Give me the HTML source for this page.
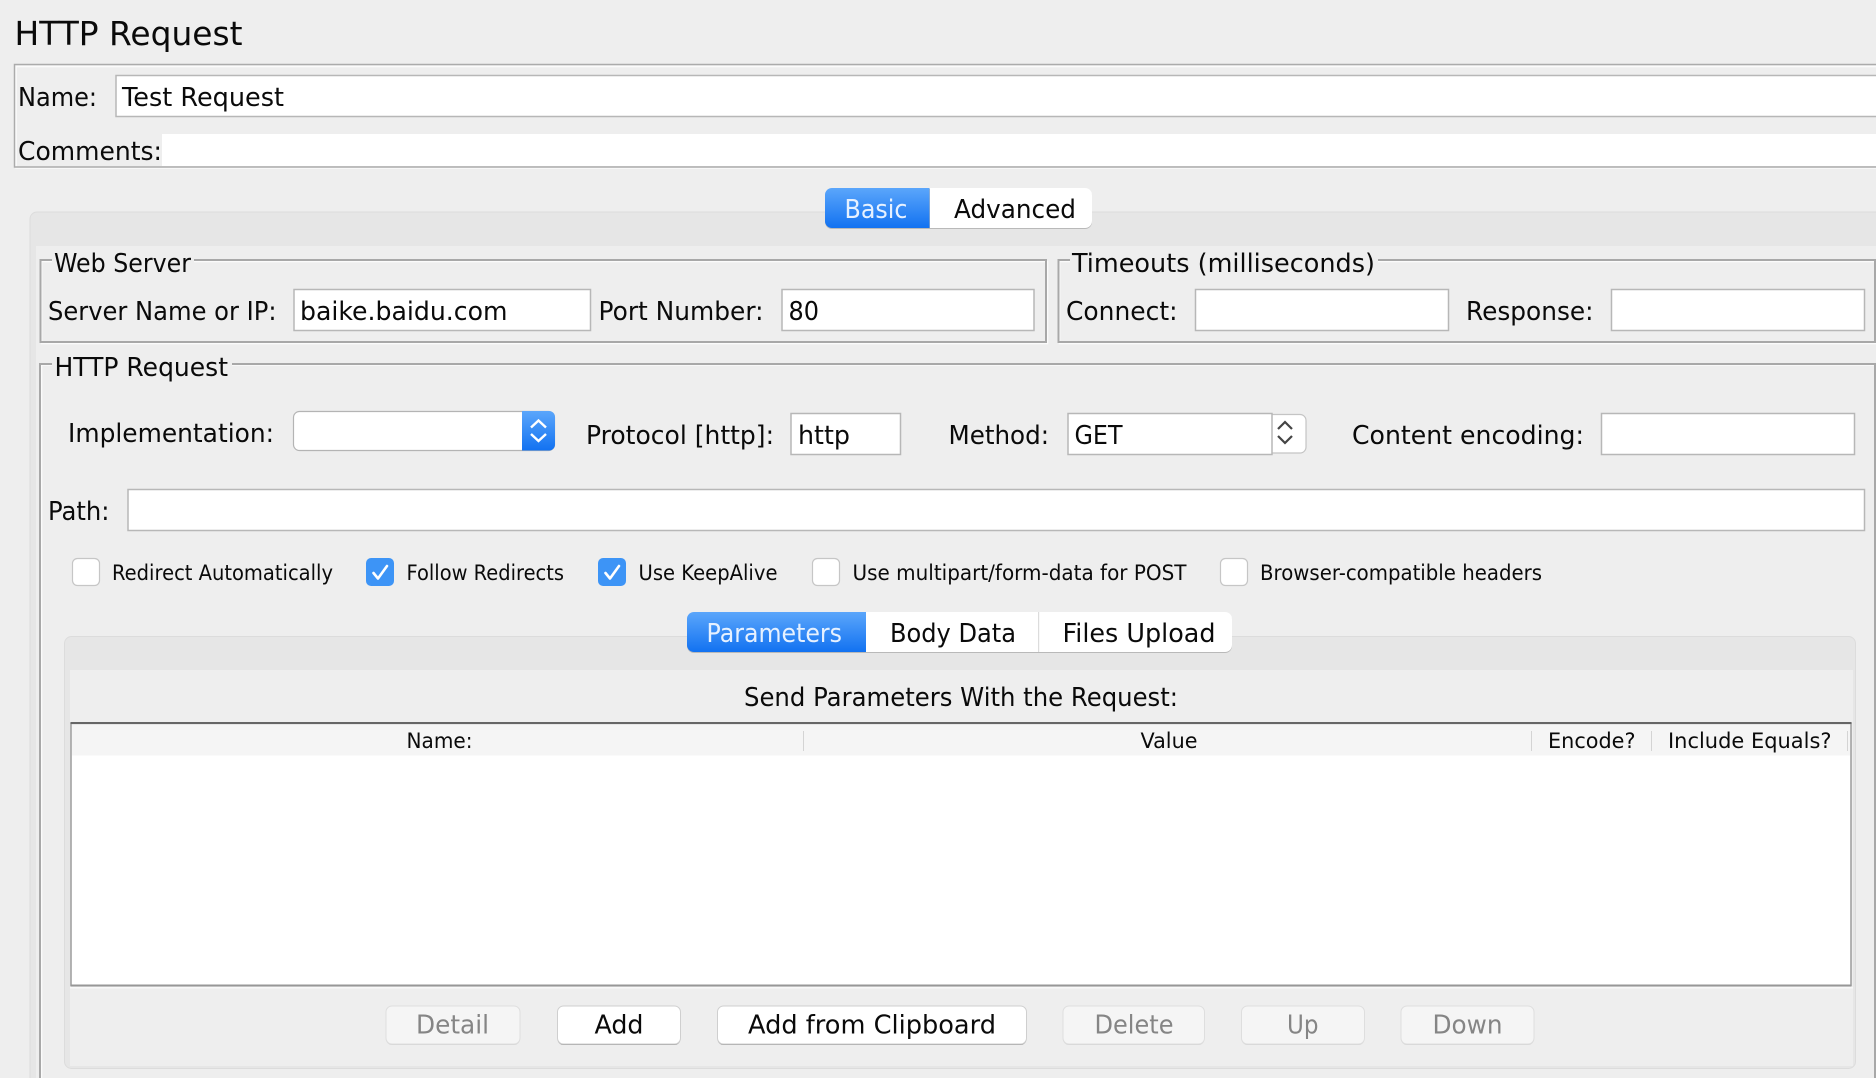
<!DOCTYPE html>
<html><head><meta charset="utf-8"><title>HTTP Request</title>
<style>
html,body{margin:0;padding:0;background:#eee;width:1876px;height:1078px;overflow:hidden}
svg{display:block}
text{font-family:"DejaVu Sans","Liberation Sans",sans-serif;fill:#0a0a0a;font-size:26px}
.s{font-size:21.5px}
.d{fill:#858585}
.in{fill:#fff;stroke:#b7b7b7;stroke-width:1.5}
.et{fill:none;stroke:#a8a8a8;stroke-width:2}
.wh{fill:none;stroke:#fbfbfb;stroke-width:1.5}
.cb{fill:#fff;stroke:#c6c6c6;stroke-width:1.2}
.cc{fill:#3d94f6}
.ck{fill:none;stroke:#fff;stroke-width:2.6;stroke-linecap:round;stroke-linejoin:round}
.ch{fill:none;stroke:#fff;stroke-width:2.4}
.ch2{fill:none;stroke:#444;stroke-width:2.2}
.be{fill:#fff;stroke:#cfcfcf;stroke-width:1}
.bd{fill:#f5f5f5;stroke:#dedede;stroke-width:1}
</style></head><body>
<svg xmlns="http://www.w3.org/2000/svg" width="1876" height="1078" viewBox="0 0 1876 1078">
<defs>
<linearGradient id="bl" x1="0" y1="0" x2="0" y2="1"><stop offset="0" stop-color="#5ba6fb"/><stop offset="1" stop-color="#1272f1"/></linearGradient>
</defs>
<rect width="1876" height="1078" fill="#eee"/>
<text x="14.5" y="45" style="font-size:33px" textLength="228" lengthAdjust="spacingAndGlyphs">HTTP Request</text>

<!-- name / comments frame -->
<path d="M1876 66.5H16V168H1876" fill="none" stroke="#fbfbfb" stroke-width="1.5"/>
<path d="M1876 64.5H14.5V167H1876" fill="none" stroke="#ababab" stroke-width="1.5"/>
<rect x="116" y="75.5" width="1770" height="41" class="in"/>
<rect x="162" y="134" width="1714" height="32" fill="#fff"/>
<text x="18" y="106" textLength="79" lengthAdjust="spacingAndGlyphs">Name:</text>
<text x="122" y="106" textLength="162" lengthAdjust="spacingAndGlyphs">Test Request</text>
<text x="18" y="160" textLength="144" lengthAdjust="spacingAndGlyphs">Comments:</text>

<!-- outer tabbed pane -->
<rect x="30" y="212" width="1900" height="900" rx="7" fill="#e6e6e6" stroke="#dcdcdc" stroke-width="1"/>
<rect x="36" y="246" width="1840" height="840" fill="#eee"/>
<rect x="825" y="189" width="267" height="40" rx="7" fill="#b9b9b9"/>
<path d="M930 188H1085a7 7 0 0 1 7 7V221a7 7 0 0 1 -7 7H930Z" fill="#fff"/>
<path d="M929.5 188H832a7 7 0 0 0 -7 7V221a7 7 0 0 0 7 7H929.5Z" fill="url(#bl)"/>
<text x="844.5" y="218" style="fill:#e6f1ff" textLength="63" lengthAdjust="spacingAndGlyphs">Basic</text>
<text x="954" y="218" textLength="122" lengthAdjust="spacingAndGlyphs">Advanced</text>

<!-- web server group -->
<path d="M52 261.5H41.5V343.5H1047.5V261.5H194" class="wh"/>
<path d="M52 260H40.5V342H1046V260H194" class="et"/>
<text x="54" y="272" textLength="137" lengthAdjust="spacingAndGlyphs">Web Server</text>
<text x="48" y="320" textLength="228.5" lengthAdjust="spacingAndGlyphs">Server Name or IP:</text>
<rect x="294" y="289.5" width="296.5" height="41" class="in"/>
<text x="300" y="320" textLength="207.5" lengthAdjust="spacingAndGlyphs">baike.baidu.com</text>
<text x="598.5" y="320" textLength="165" lengthAdjust="spacingAndGlyphs">Port Number:</text>
<rect x="782" y="289.5" width="252" height="41" class="in"/>
<text x="788.5" y="320" textLength="30.5" lengthAdjust="spacingAndGlyphs">80</text>

<!-- timeouts group -->
<path d="M1070 261.5H1059.5V343.5H1876.5V261.5H1378" class="wh"/>
<path d="M1070 260H1058.5V342H1875V260H1378" class="et"/>
<text x="1072" y="272" textLength="303" lengthAdjust="spacingAndGlyphs">Timeouts (milliseconds)</text>
<text x="1066" y="320" textLength="111.5" lengthAdjust="spacingAndGlyphs">Connect:</text>
<rect x="1195.5" y="289.5" width="253" height="41" class="in"/>
<text x="1466" y="320" textLength="127.5" lengthAdjust="spacingAndGlyphs">Response:</text>
<rect x="1611.5" y="289.5" width="253" height="41" class="in"/>

<!-- http request group -->
<path d="M52 365H41.5V1078M1876.5 1078V365H232" class="wh"/>
<path d="M52 364H40V1078M1875 1078V364H232" class="et"/>
<text x="54.5" y="376" textLength="173.5" lengthAdjust="spacingAndGlyphs">HTTP Request</text>

<text x="68" y="442" textLength="206" lengthAdjust="spacingAndGlyphs">Implementation:</text>
<rect x="293.5" y="411.5" width="261" height="39" rx="6" fill="#fff" stroke="#b4b4b4" stroke-width="1.2"/>
<path d="M522 411H549a6 6 0 0 1 6 6V444.5a6 6 0 0 1 -6 6H522Z" fill="url(#bl)"/>
<path d="M531 427.5L538.5 420.5L546 427.5" class="ch"/>
<path d="M531 434L538.5 441L546 434" class="ch"/>

<text x="586" y="444" textLength="188" lengthAdjust="spacingAndGlyphs">Protocol [http]:</text>
<rect x="791" y="413.5" width="109.5" height="41" class="in"/>
<text x="798" y="444" textLength="52" lengthAdjust="spacingAndGlyphs">http</text>

<text x="948.5" y="444" textLength="100.5" lengthAdjust="spacingAndGlyphs">Method:</text>
<rect x="1260" y="414.5" width="46" height="38.5" rx="6" fill="#fff" stroke="#c4c4c4" stroke-width="1.2"/>
<rect x="1068" y="413.5" width="204" height="41" class="in"/>
<rect x="1070" y="415" width="201" height="38" fill="#fff"/>
<path d="M1278 429L1285 422L1292 429" class="ch2"/>
<path d="M1278 436L1285 443L1292 436" class="ch2"/>
<text x="1074.5" y="444" textLength="48" lengthAdjust="spacingAndGlyphs">GET</text>

<text x="1352" y="444" textLength="232" lengthAdjust="spacingAndGlyphs">Content encoding:</text>
<rect x="1601.5" y="413.5" width="253" height="41" class="in"/>

<text x="48" y="520" textLength="61.5" lengthAdjust="spacingAndGlyphs">Path:</text>
<rect x="128" y="489.5" width="1736.5" height="41" class="in"/>

<!-- checkboxes -->
<rect x="72.5" y="558.5" width="27" height="27" rx="5" class="cb"/>
<text x="112" y="580" class="s" textLength="221" lengthAdjust="spacingAndGlyphs">Redirect Automatically</text>
<rect x="366" y="558" width="28" height="28" rx="5" class="cc"/>
<path d="M373.5 573L378 578.5L387 566" class="ck"/>
<text x="406.5" y="580" class="s" textLength="157.5" lengthAdjust="spacingAndGlyphs">Follow Redirects</text>
<rect x="598" y="558" width="28" height="28" rx="5" class="cc"/>
<path d="M605.5 573L610 578.5L619 566" class="ck"/>
<text x="638.5" y="580" class="s" textLength="139" lengthAdjust="spacingAndGlyphs">Use KeepAlive</text>
<rect x="812.5" y="558.5" width="27" height="27" rx="5" class="cb"/>
<text x="852.5" y="580" class="s" textLength="334" lengthAdjust="spacingAndGlyphs">Use multipart/form-data for POST</text>
<rect x="1220.5" y="558.5" width="27" height="27" rx="5" class="cb"/>
<text x="1260" y="580" class="s" textLength="282" lengthAdjust="spacingAndGlyphs">Browser-compatible headers</text>

<!-- inner tabbed pane -->
<rect x="64.5" y="636.5" width="1791" height="432" rx="7" fill="#e6e6e6" stroke="#dcdcdc" stroke-width="1"/>
<rect x="70" y="670" width="1783" height="396" fill="#eee"/>
<rect x="687" y="613" width="545" height="40" rx="7" fill="#b9b9b9"/>
<path d="M866 612H1225a7 7 0 0 1 7 7V645a7 7 0 0 1 -7 7H866Z" fill="#fff"/>
<rect x="1038" y="612" width="1.2" height="40" fill="#dcdcdc"/>
<path d="M866 612H694a7 7 0 0 0 -7 7V645a7 7 0 0 0 7 7H866Z" fill="url(#bl)"/>
<text x="706.5" y="642" style="fill:#e6f1ff" textLength="135.5" lengthAdjust="spacingAndGlyphs">Parameters</text>
<text x="890" y="642" textLength="126" lengthAdjust="spacingAndGlyphs">Body Data</text>
<text x="1062.5" y="642" textLength="153" lengthAdjust="spacingAndGlyphs">Files Upload</text>

<text x="744" y="706" textLength="434" lengthAdjust="spacingAndGlyphs">Send Parameters With the Request:</text>

<!-- table -->
<rect x="71" y="723" width="1780" height="262" fill="#fff"/>
<rect x="72" y="725" width="1778" height="30.5" fill="#f5f5f5"/>
<rect x="803" y="731" width="1" height="20" fill="#d4d4d4"/>
<rect x="1531" y="731" width="1" height="20" fill="#d4d4d4"/>
<rect x="1651" y="731" width="1" height="20" fill="#d4d4d4"/>
<rect x="1847" y="731" width="1" height="20" fill="#d4d4d4"/>
<path d="M71 986V723.5H1851V986" fill="none" stroke="#9b9b9b" stroke-width="1.5"/>
<rect x="70.5" y="722" width="1781" height="2" fill="#666"/>
<rect x="70.5" y="984.5" width="1781" height="2" fill="#979797"/>
<rect x="70" y="987" width="1783" height="1.5" fill="#f8f8f8"/>
<text x="406.5" y="748" class="s" textLength="66" lengthAdjust="spacingAndGlyphs">Name:</text>
<text x="1140.5" y="748" class="s" textLength="57" lengthAdjust="spacingAndGlyphs">Value</text>
<text x="1548" y="748" class="s" textLength="87.5" lengthAdjust="spacingAndGlyphs">Encode?</text>
<text x="1668" y="748" class="s" textLength="163.5" lengthAdjust="spacingAndGlyphs">Include Equals?</text>

<!-- buttons -->
<rect x="386" y="1007" width="134" height="38" rx="6" fill="#d4d4d4"/>
<rect x="386" y="1006" width="134" height="38" rx="6" class="bd"/>
<text x="416" y="1033.5" class="d" textLength="73" lengthAdjust="spacingAndGlyphs">Detail</text>
<rect x="557.5" y="1007" width="123" height="38" rx="6" fill="#9c9c9c"/>
<rect x="557.5" y="1006" width="123" height="38" rx="6" class="be"/>
<text x="594.5" y="1033.5" textLength="49" lengthAdjust="spacingAndGlyphs">Add</text>
<rect x="717.5" y="1007" width="309" height="38" rx="6" fill="#9c9c9c"/>
<rect x="717.5" y="1006" width="309" height="38" rx="6" class="be"/>
<text x="748" y="1033.5" textLength="248" lengthAdjust="spacingAndGlyphs">Add from Clipboard</text>
<rect x="1063" y="1007" width="141.5" height="38" rx="6" fill="#d4d4d4"/>
<rect x="1063" y="1006" width="141.5" height="38" rx="6" class="bd"/>
<text x="1094.5" y="1033.5" class="d" textLength="79" lengthAdjust="spacingAndGlyphs">Delete</text>
<rect x="1241.5" y="1007" width="123" height="38" rx="6" fill="#d4d4d4"/>
<rect x="1241.5" y="1006" width="123" height="38" rx="6" class="bd"/>
<text x="1287" y="1033.5" class="d" textLength="31.5" lengthAdjust="spacingAndGlyphs">Up</text>
<rect x="1401" y="1007" width="133" height="38" rx="6" fill="#d4d4d4"/>
<rect x="1401" y="1006" width="133" height="38" rx="6" class="bd"/>
<text x="1432.5" y="1033.5" class="d" textLength="70" lengthAdjust="spacingAndGlyphs">Down</text>
</svg>
</body></html>
